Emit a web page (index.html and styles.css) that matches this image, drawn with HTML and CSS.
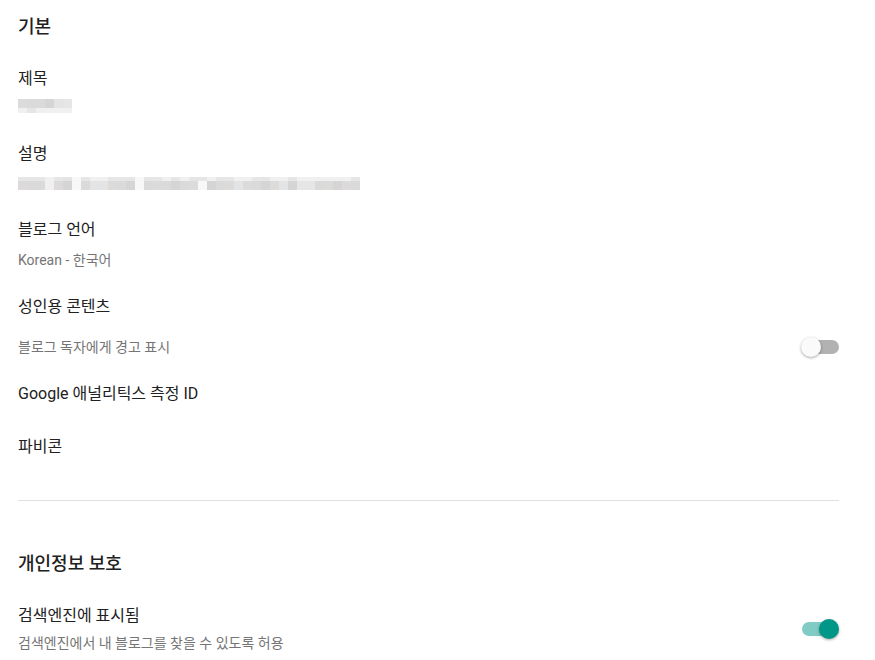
FILE: index.html
```html
<!DOCTYPE html>
<html lang="ko">
<head>
<meta charset="utf-8">
<title>설정</title>
<link rel="stylesheet" href="styles.css">
</head>
<body>
<div class="page">
  <section class="section">
    <h2 class="section-title">기본</h2>

    <div class="item">
      <div class="label">제목</div>
      <div class="mosaic m-title">
        <div class="mrow tall">
          <span class="c3"></span><span class="c2"></span><span class="c2"></span><span class="c1"></span><span class="c4"></span><span class="c5"></span>
        </div>
        <div class="mrow short">
          <span class="c6"></span><span class="c5"></span><span class="c6"></span><span class="c6"></span><span class="c6"></span><span class="c6"></span>
        </div>
      </div>
    </div>

    <div class="item item-desc">
      <div class="label">설명</div>
      <div class="mosaic m-desc">
        <div class="mrow short">
          <span class="c5"></span><span class="c5"></span><span class="c5"></span><span class="c6"></span><span class="c5"></span><span class="c4"></span><span class="c7"></span><span class="c5"></span><span class="c6"></span><span class="c6"></span><span class="c5"></span><span class="c5"></span><span class="c5"></span><span class="c7"></span><span class="c5"></span><span class="c5"></span><span class="c6"></span><span class="c5"></span><span class="c6"></span><span class="c5"></span><span class="c5"></span><span class="c6"></span><span class="c5"></span><span class="c5"></span><span class="c6"></span><span class="c6"></span><span class="c5"></span><span class="c5"></span><span class="c6"></span><span class="c6"></span><span class="c5"></span><span class="c6"></span><span class="c6"></span><span class="c6"></span><span class="c6"></span><span class="c6"></span><span class="c6"></span><span class="c5"></span>
        </div>
        <div class="mrow tall">
          <span class="c3"></span><span class="c2"></span><span class="c2"></span><span class="c6"></span><span class="c3"></span><span class="c1"></span><span class="c7"></span><span class="c2"></span><span class="c4"></span><span class="c4"></span><span class="c3"></span><span class="c2"></span><span class="c1"></span><span class="c7"></span><span class="c2"></span><span class="c3"></span><span class="c2"></span><span class="c1"></span><span class="c2"></span><span class="c3"></span><span class="c7"></span><span class="c1"></span><span class="c2"></span><span class="c3"></span><span class="c4"></span><span class="c3"></span><span class="c2"></span><span class="c1"></span><span class="c3"></span><span class="c4"></span><span class="c1"></span><span class="c5"></span><span class="c5"></span><span class="c2"></span><span class="c3"></span><span class="c1"></span><span class="c3"></span><span class="c2"></span>
        </div>
      </div>
    </div>

    <div class="item">
      <div class="label">블로그 언어</div>
      <div class="sub sub-value">Korean - 한국어</div>
    </div>

    <div class="item item-after-sub">
      <div class="label">성인용 콘텐츠</div>
      <div class="row row-adult">
        <div class="sub">블로그 독자에게 경고 표시</div>
        <div class="toggle"><span class="track"></span><span class="thumb"></span></div>
      </div>
    </div>

    <div class="item item-ga">
      <div class="label">Google 애널리틱스 측정 ID</div>
    </div>

    <div class="item item-fav">
      <div class="label">파비콘</div>
    </div>
  </section>

  <hr class="divider">

  <section class="section">
    <h2 class="section-title title-privacy">개인정보 보호</h2>

    <div class="item row">
      <div class="text-col">
        <div class="label">검색엔진에 표시됨</div>
        <div class="sub sub-search">검색엔진에서 내 블로그를 찾을 수 있도록 허용</div>
      </div>
      <div class="toggle on"><span class="track"></span><span class="thumb"></span></div>
    </div>
  </section>
</div>
</body>
</html>
```

FILE: styles.css
```css
html, body {
  margin: 0;
  padding: 0;
  background: #ffffff;
}

body {
  font-family: Roboto, "Noto Sans CJK KR", "Noto Sans", sans-serif;
  color: #212121;
}

.page {
  padding: 15px 36px 0 18px;
}

.section-title {
  margin: 0;
  font-size: 18px;
  line-height: 24px;
  font-weight: 500;
  color: #212121;
}

.title-privacy {
  margin-top: 51px;
}

.item {
  margin-top: 28px;
}

.item-desc {
  margin-top: 29px;
}

.item-after-sub {
  margin-top: 25px;
}

.item-ga {
  margin-top: 23px;
}

.item-fav {
  margin-top: 29px;
}

.label {
  font-size: 16px;
  line-height: 24px;
  color: #212121;
}

.sub {
  font-size: 14px;
  line-height: 20px;
  color: #757575;
}

.sub-value {
  margin-top: 8px;
}

.sub-search {
  margin-top: 5px;
}

.row {
  display: flex;
  align-items: center;
  justify-content: space-between;
}

.row-adult {
  margin-top: 16px;
  height: 24px;
}

.text-col {
  display: flex;
  flex-direction: column;
}

/* blurred (pixelated) placeholder values */
.mosaic {
  display: flex;
  flex-direction: column;
}

.m-title {
  margin-top: 8px;
}

.m-desc {
  margin-top: 11px;
}

.mrow {
  display: flex;
}

.mrow span {
  display: block;
  width: 9px;
}

.mrow.tall span {
  height: 9px;
}

.mrow.short span {
  height: 5px;
}

.m-desc .mrow.short span {
  height: 4px;
}

.c1 { background: #d5d5d5; }
.c2 { background: #dadada; }
.c3 { background: #dddbda; }
.c4 { background: #e2e4e6; }
.c5 { background: #e6e6e7; }
.c6 { background: #f0f0f0; }
.c7 { background: #f8f8f8; }

.divider {
  margin: 41px 0 0;
  border: 0;
  border-top: 1px solid #e0e0e0;
  height: 0;
}

/* toggle switch */
.toggle {
  position: relative;
  width: 38px;
  height: 20px;
  flex: none;
}

.track {
  position: absolute;
  left: 2px;
  right: 0;
  top: 3px;
  height: 14px;
  border-radius: 7px;
  background: #b2b2b2;
}

.thumb {
  position: absolute;
  left: 0;
  top: 0;
  width: 20px;
  height: 20px;
  border-radius: 50%;
  background: #fafafa;
  box-shadow: 0 1px 3px rgba(0, 0, 0, 0.35);
}

.toggle.on .track {
  left: 1px;
  right: 1px;
  background: #80cbc4;
}

.toggle.on .thumb {
  left: 18px;
  background: #009688;
}
```
